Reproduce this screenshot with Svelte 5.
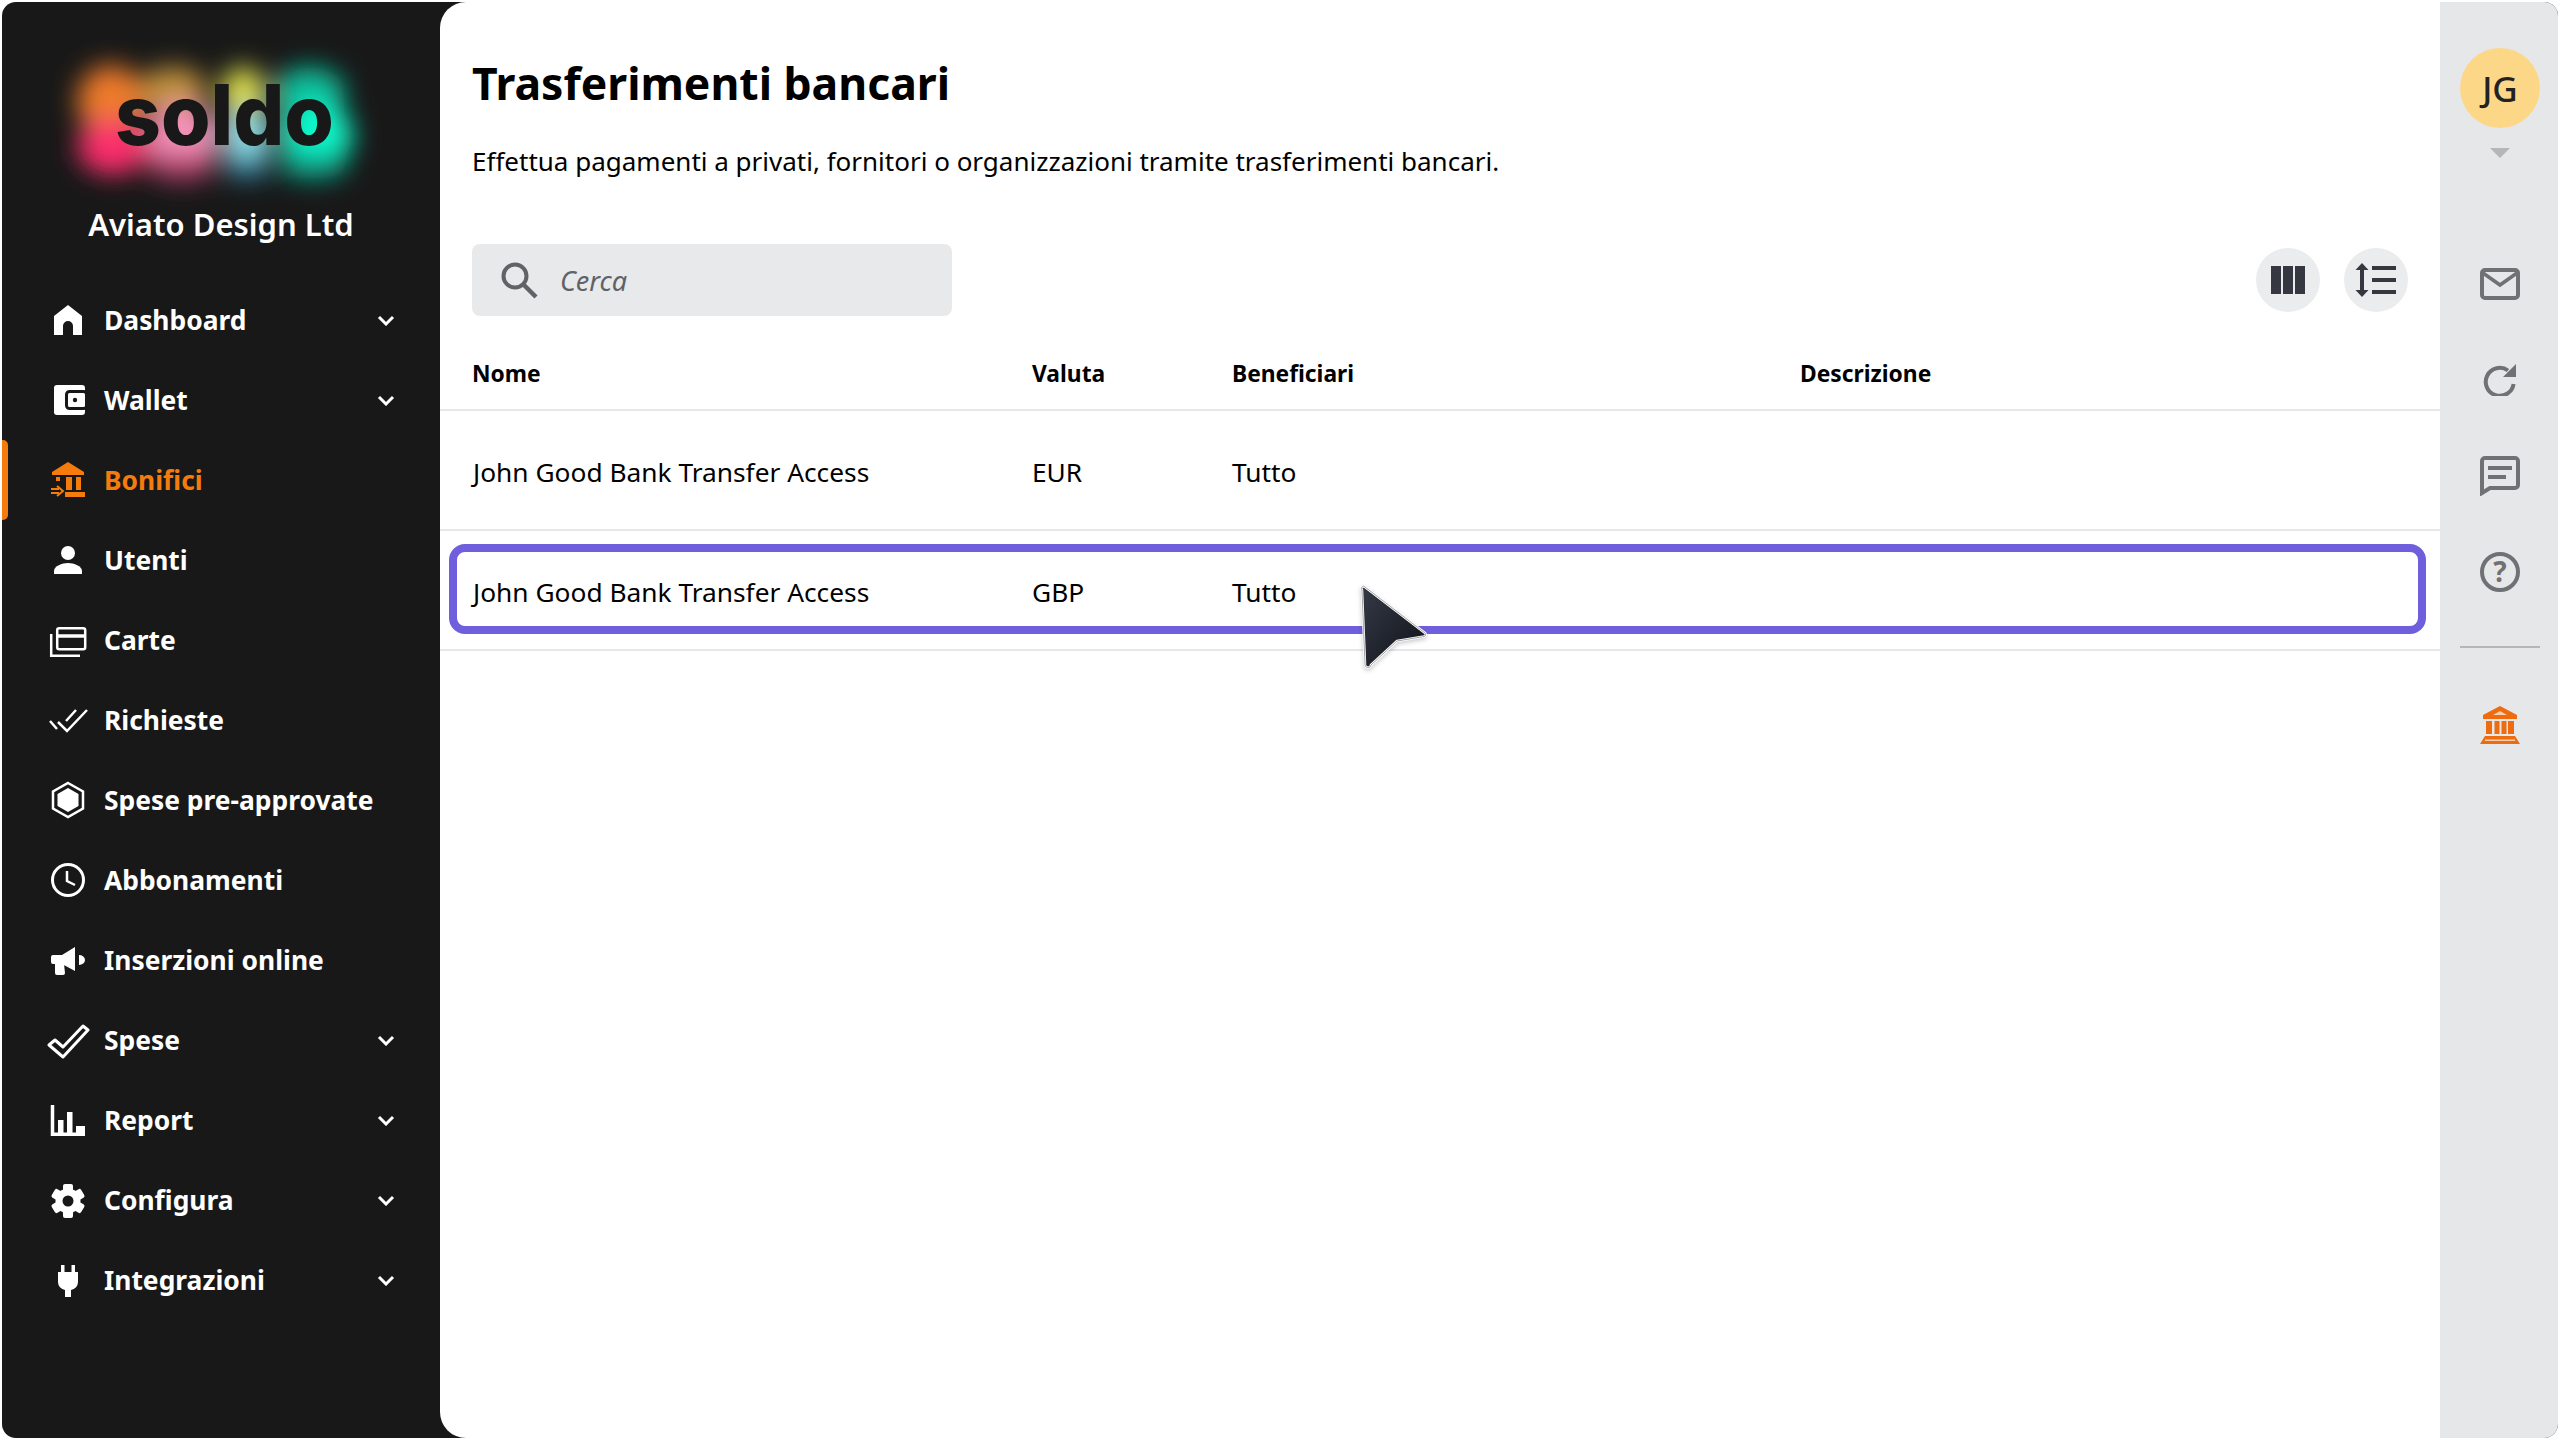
<script>
  const navItems = [
    { label: 'Dashboard', arrow: true, icon: '<path fill="#fff" d="M22 7 36 18V37H27V28a5 5 0 0 0-10 0V37H8V18Z"/>' },
    { label: 'Wallet', arrow: true, icon: '<rect x="8" y="7" width="31" height="30" rx="3" fill="#fff"/><rect x="20.5" y="13.5" width="20" height="17" rx="3" fill="#fff" stroke="#181818" stroke-width="3"/><circle cx="29" cy="22" r="2.2" fill="#181818"/>' },
    { label: 'Bonifici', active: true, icon: '<path fill="currentColor" d="M22 4 38 14V17H6V14Z"/><path fill="currentColor" d="M10 19h4v4h-4ZM20 19h6v13h-6ZM30 19h5v13h-5ZM19 34h20v5H19Z"/><path fill="none" stroke="currentColor" stroke-width="2" d="M5 31h8M5 35h8M11 28l6 5-6 5"/>' },
    { label: 'Utenti', icon: '<circle cx="22" cy="15" r="7" fill="#fff"/><path fill="#fff" d="M8 36V33c0-5 8-8 14-8s14 3 14 8v3Z"/>' },
    { label: 'Carte', icon: '<rect x="11.2" y="10.2" width="28" height="21" rx="2" fill="none" stroke="#fff" stroke-width="2.5"/><path stroke="#fff" stroke-width="3.5" d="M11 18H39"/><path fill="none" stroke="#fff" stroke-width="2.5" d="M5.2 16V37.8H34"/>' },
    { label: 'Richieste', icon: '<path fill="none" stroke="#fff" stroke-width="2.5" d="M4 23 11 31M12 24 21 33 41 12M20 23 30 12"/>' },
    { label: 'Spese pre-approvate', icon: '<path fill="none" stroke="#fff" stroke-width="2.5" d="M22 5 37 13.5V30.5L22 39 7 30.5V13.5Z"/><path fill="#fff" d="M22 10 32.5 16V28L22 34 11.5 28V16Z"/>' },
    { label: 'Abbonamenti', icon: '<circle cx="22" cy="22" r="15.5" fill="none" stroke="#fff" stroke-width="3"/><path fill="none" stroke="#fff" stroke-width="2.5" d="M21 13V23L29 27"/>' },
    { label: 'Inserzioni online', icon: '<path fill="#fff" d="M7 17H16L29 9V33L16 26H7a2 2 0 0 1-2-2V19a2 2 0 0 1 2-2ZM9 26h9l1 9a2 2 0 0 1-2 2H11a2 2 0 0 1-2-2ZM33 17a6 5 0 0 1 0 10Z"/>' },
    { label: 'Spese', arrow: true, icon: '<path fill="none" stroke="#fff" stroke-width="3" stroke-linejoin="round" d="M3 27 9 22 17 29 37 8 42 12 17 39Z"/>' },
    { label: 'Report', arrow: true, icon: '<path fill="none" stroke="#fff" stroke-width="3.5" d="M6.5 7V36.300H39"/><path fill="#fff" d="M12 22h5.500v14H12ZM21 14h5.500v22H21ZM30 28h9v8h-9Z"/>' },
    { label: 'Configura', arrow: true, icon: '<g fill="#fff"><rect x="17" y="6" width="10" height="34" rx="2"/><rect x="17" y="6" width="10" height="34" rx="2" transform="rotate(60 22 23)"/><rect x="17" y="6" width="10" height="34" rx="2" transform="rotate(120 22 23)"/><circle cx="22" cy="23" r="12.5"/></g><circle cx="22" cy="23" r="5.5" fill="#181818"/>' },
    { label: 'Integrazioni', arrow: true, icon: '<path fill="#fff" d="M15 7h3.5v7H15ZM25.5 7H29v7h-3.5ZM12 14H32V24a8 8 0 0 1-7 8V39H19V32a8 8 0 0 1-7-8Z"/>' }
  ];

  const rows = [
    { name: 'John Good Bank Transfer Access', currency: 'EUR', who: 'Tutto' },
    { name: 'John Good Bank Transfer Access', currency: 'GBP', who: 'Tutto', focused: true }
  ];
</script>

<div class="shell">
  <aside class="sidebar">
    <div class="brand">
      <svg class="logo" width="320" height="160" viewBox="0 0 320 160">
        <defs>
          <filter id="glow" x="-30%" y="-30%" width="160%" height="160%"><feGaussianBlur stdDeviation="13" /></filter>
        </defs>
        <g filter="url(#glow)" transform="translate(-19 -11)">
          <ellipse cx="70" cy="72" rx="34" ry="36" fill="#ee7a2c" />
          <ellipse cx="72" cy="118" rx="36" ry="28" fill="#fb2f6c" />
          <ellipse cx="132" cy="62" rx="34" ry="24" fill="#c4933c" />
          <ellipse cx="142" cy="108" rx="36" ry="32" fill="#f792ba" />
          <ellipse cx="140" cy="138" rx="34" ry="14" fill="#b03e66" />
          <ellipse cx="202" cy="64" rx="22" ry="26" fill="#e2e250" />
          <ellipse cx="206" cy="108" rx="24" ry="28" fill="#8fe0e8" />
          <ellipse cx="206" cy="138" rx="24" ry="12" fill="#2d7f9c" />
          <ellipse cx="268" cy="64" rx="36" ry="26" fill="#0cbf9c" />
          <ellipse cx="276" cy="106" rx="36" ry="32" fill="#0cfacc" />
          <ellipse cx="272" cy="136" rx="34" ry="14" fill="#0aa78c" />
        </g>
        <text class="logo-word" x="55" y="105" textLength="219" lengthAdjust="spacingAndGlyphs">soldo</text>
      </svg>
      <div class="company">Aviato Design Ltd</div>
    </div>

    <nav class="nav">
      {#each navItems as item}
        <div class="nav-item" class:active={item.active}>
          <svg class="nav-icon" width="44" height="44" viewBox="0 0 44 44">{@html item.icon}</svg>
          <span class="nav-label">{item.label}</span>
          {#if item.arrow}
            <svg class="chevron" width="18" height="11" viewBox="0 0 18 11"><path d="M2 2 9 9 16 2" fill="none" stroke="#fff" stroke-width="3" /></svg>
          {/if}
        </div>
      {/each}
    </nav>
  </aside>

  <main class="main">
    <h1 class="title">Trasferimenti bancari</h1>
    <p class="subtitle">Effettua pagamenti a privati, fornitori o organizzazioni tramite trasferimenti bancari.</p>

    <div class="toolbar">
      <div class="search">
        <svg width="38" height="38" viewBox="0 0 38 38"><circle cx="15" cy="15" r="11.5" fill="none" stroke="#606266" stroke-width="4" /><path d="M23 23 36 36" stroke="#606266" stroke-width="4.5" /></svg>
        <span class="search-text">Cerca</span>
      </div>
      <div class="tools">
        <button class="tool" aria-label="Colonne">
          <svg width="34" height="28" viewBox="0 0 34 28"><path fill="#353840" d="M0 0h10v28H0ZM12 0h10v28H12ZM24 0h10v28H24Z" /></svg>
        </button>
        <button class="tool" aria-label="Densità">
          <svg width="42" height="34" viewBox="0 0 42 34"><path fill="#353840" d="M7 0 13.500 7H9V27H13.500L7 34 .5 27H5V7H.5ZM17 3H41V7H17ZM17 15H41V19H17ZM17 27H41V31H17Z" /></svg>
        </button>
      </div>
    </div>

    <div class="table">
      <div class="row head">
        <span>Nome</span><span>Valuta</span><span>Beneficiari</span><span>Descrizione</span>
      </div>
      {#each rows as row}
        <div class="row" class:focused={row.focused}>
          <span>{row.name}</span><span>{row.currency}</span><span>{row.who}</span><span></span>
        </div>
      {/each}
    </div>

    <svg class="cursor" width="72" height="90" viewBox="0 0 72 90">
      <defs>
        <linearGradient id="arrow" x1="0" y1="0" x2="1" y2="1"><stop offset="0" stop-color="#353a46" /><stop offset="1" stop-color="#0f1118" /></linearGradient>
      </defs>
      <path d="M6 4 66 50a2 2 0 0 1-1 3.500L38 58 12 82a3 3 0 0 1-6-1L3 7a2 2 0 0 1 3-3Z" fill="url(#arrow)" stroke="#fff" stroke-width="2.500" stroke-linejoin="round" />
      <path d="M6 4 66 50a2 2 0 0 1-1 3.500L38 58 12 82a3 3 0 0 1-6-1L3 7a2 2 0 0 1 3-3Z" fill="none" stroke="#8b8d92" stroke-width=".8" />
    </svg>
  </main>

  <aside class="rail">
    <div class="avatar">JG</div>
    <div class="caret"></div>
    <svg class="rail-icon mail" width="40" height="32" viewBox="0 0 40 32"><rect x="2" y="2" width="36" height="28" rx="3" fill="none" stroke="#6f7174" stroke-width="4" /><path d="M3 5 20 17 37 5" fill="none" stroke="#6f7174" stroke-width="3.500" /></svg>
    <svg class="rail-icon refresh" width="40" height="32" viewBox="0 0 40 32"><path d="M28 6.500A14 14 0 1 0 33.600 20" fill="none" stroke="#6f7174" stroke-width="4" /><path d="M36 0V13H23Z" fill="#6f7174" /></svg>
    <svg class="rail-icon chat" width="40" height="40" viewBox="0 0 40 40"><path d="M2 5a3 3 0 0 1 3-3H35a3 3 0 0 1 3 3V29a3 3 0 0 1-3 3H10L2 37Z" fill="none" stroke="#6f7174" stroke-width="4" /><path d="M8 12H32M8 21H26" stroke="#6f7174" stroke-width="4" /></svg>
    <div class="rail-icon help">?</div>
    <div class="divider"></div>
    <svg class="rail-icon bank" width="40" height="38" viewBox="0 0 40 38"><path fill="#ee6c0f" d="M20 0 37 9V13H3V9ZM6 15h6V28H6ZM14.500 15h5V28h-5ZM21.500 15h5V28h-5ZM28 15h6V28H28ZM5 30H35L40 38H0Z" /><path fill="#f9cfae" d="M20 5 27 9H13ZM5 33.500H35V35H5Z" /></svg>
  </aside>
</div>

<style>
  :global(body) {
    margin: 0;
    background: #ffffff;
    font-family: 'Noto Sans', 'Open Sans', Arial, sans-serif;
  }

  .shell {
    display: flex;
    height: 1436px;
    margin: 2px;
    background: #181818;
    border-radius: 14px;
    overflow: hidden;
    color: #000;
  }

  /* Sidebar */
  .sidebar {
    width: 438px;
    flex-shrink: 0;
    color: #fff;
  }

  .brand {
    display: flex;
    flex-direction: column;
    align-items: center;
    height: 278px;
  }

  .logo {
    margin-top: 38px;
    margin-left: -2px;
    overflow: visible;
  }

  .logo-word {
    font-family: 'Inter', 'Noto Sans', sans-serif;
    font-size: 84px;
    font-weight: 800;
    fill: #181818;
  }

  .company {
    margin-top: 2px;
    font-size: 31px;
    font-weight: 600;
    line-height: 44px;
  }

  .nav-item {
    position: relative;
    display: flex;
    align-items: center;
    height: 80px;
    padding-left: 44px;
    font-size: 26.4px;
    font-weight: 700;
    box-sizing: border-box;
  }

  .nav-item.active {
    color: #f57c0c;
  }

  .nav-item.active::before {
    content: '';
    position: absolute;
    left: 0;
    top: 0;
    width: 6px;
    height: 80px;
    background: #f57c0c;
    border-radius: 0 5px 5px 0;
  }

  .nav-label {
    margin-left: 14px;
  }

  .chevron {
    position: absolute;
    left: 375px;
    top: 35px;
  }

  /* Main */
  .main {
    position: relative;
    flex: 1;
    background: #fff;
    border-radius: 26px 0 0 26px;
    overflow: hidden;
  }

  .title {
    margin: 49px 0 0 32px;
    font-size: 44.5px;
    font-weight: 700;
    line-height: 64px;
  }

  .subtitle {
    margin: 26px 0 0 32px;
    font-size: 26px;
    line-height: 40px;
  }

  .toolbar {
    display: flex;
    justify-content: space-between;
    align-items: center;
    margin: 63px 32px 0 32px;
    height: 72px;
  }

  .search {
    display: flex;
    align-items: center;
    width: 480px;
    height: 72px;
    box-sizing: border-box;
    padding-left: 28px;
    background: #e8e9eb;
    border-radius: 8px;
  }

  .search-text {
    margin-left: 22px;
    font-size: 27px;
    font-style: italic;
    color: #606266;
  }

  .tools {
    display: flex;
    gap: 24px;
  }

  .tool {
    display: flex;
    align-items: center;
    justify-content: center;
    width: 64px;
    height: 64px;
    padding: 0;
    border: none;
    border-radius: 50%;
    background: #ebecee;
  }

  .table {
    margin-top: 23px;
  }

  .row {
    position: relative;
    display: grid;
    grid-template-columns: 559px 200px 568px 1fr;
    align-items: center;
    height: 120px;
    box-sizing: border-box;
    padding-left: 33px;
    padding-top: 3px;
    border-bottom: 2px solid #e6e7e9;
    font-size: 26.3px;
  }

  .row.head {
    grid-template-columns: 560px 200px 568px 1fr;
    height: 72px;
    padding-left: 32px;
    padding-top: 0;
    padding-bottom: 2px;
    font-size: 22.8px;
    font-weight: 700;
  }

  .row.focused::after {
    content: '';
    position: absolute;
    left: 9px;
    right: 14px;
    top: 13px;
    height: 74px;
    border: 8px solid #705fdc;
    border-radius: 16px;
  }

  .cursor {
    position: absolute;
    left: 919px;
    top: 581px;
    filter: drop-shadow(0 2px 2px rgba(0, 0, 0, 0.2));
  }

  /* Right rail */
  .rail {
    width: 118px;
    flex-shrink: 0;
    display: flex;
    flex-direction: column;
    align-items: center;
    background: #e6e7e9;
    box-sizing: border-box;
    padding-top: 46px;
    padding-left: 2px;
  }

  .avatar {
    display: flex;
    align-items: center;
    justify-content: center;
    width: 80px;
    height: 80px;
    border-radius: 50%;
    background: #fdd788;
    color: #222;
    font-size: 35px;
    font-weight: 500;
  }

  .caret {
    margin-top: 20px;
    width: 0;
    height: 0;
    border-left: 10px solid transparent;
    border-right: 10px solid transparent;
    border-top: 10px solid #b5b6b8;
  }

  .rail-icon {
    display: block;
    flex-shrink: 0;
  }

  .mail {
    margin-top: 110px;
  }

  .refresh {
    margin-top: 64px;
  }

  .chat {
    margin-top: 60px;
  }

  .help {
    margin-top: 56px;
    width: 40px;
    height: 40px;
    box-sizing: border-box;
    border: 4px solid #6f7174;
    border-radius: 50%;
    color: #6f7174;
    font-size: 28px;
    font-weight: 700;
    line-height: 31px;
    text-align: center;
  }

  .divider {
    margin-top: 54px;
    width: 80px;
    height: 2px;
    background: #b5b6b8;
  }

  .bank {
    margin-top: 58px;
  }
</style>
